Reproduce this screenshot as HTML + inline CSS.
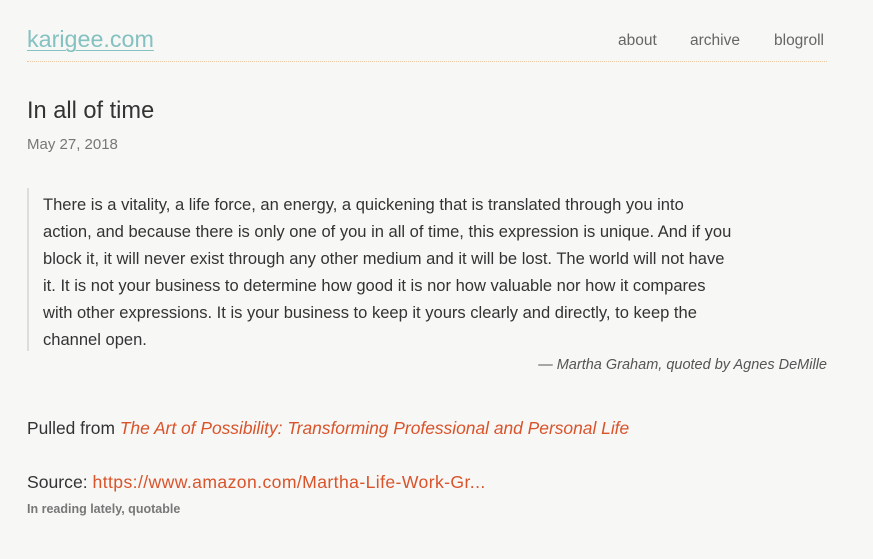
<!DOCTYPE html>
<html><head><meta charset="utf-8"><style>
body{margin:0;background:#f7f7f5;font-family:"Liberation Sans",sans-serif;color:#333;width:873px;height:559px;overflow:hidden;position:relative}
.a{position:absolute;white-space:nowrap}
.logo{left:27px;top:26px;font-size:23.3px;color:#84c1c1;text-decoration:underline;text-decoration-thickness:1px;text-underline-offset:3px}
.nav{top:32px;font-size:15.5px;color:#666}
.rule{left:27px;top:61px;width:800px;border-top:1px dotted #e8c9a0}
h1{position:absolute;left:27px;top:98px;margin:0;font-weight:normal;font-size:23.6px;color:#333}
.date{left:27px;top:136px;font-size:15px;color:#777}
.bq{position:absolute;left:27px;top:188px;height:163px;border-left:2px solid #ddd}
.q{left:43px;font-size:16.55px;color:#333;line-height:27px}
.cite{right:46px;top:357px;font-size:14.5px;font-style:italic;color:#555}
.p{left:27px;color:#333}
.red{color:#d9532b}
.tags{left:27px;top:502px;font-size:12.5px;font-weight:bold;color:#777}
</style></head><body>
<div class="a logo">karigee.com</div>
<div class="a nav" style="left:618px">about</div>
<div class="a nav" style="left:690px">archive</div>
<div class="a nav" style="left:774px">blogroll</div>
<div class="a rule"></div>
<h1>In all of time</h1>
<div class="a date">May 27, 2018</div>
<div class="bq"></div>
<div class="a q" style="top:191px">There is a vitality, a life force, an energy, a quickening that is translated through you into</div>
<div class="a q" style="top:218px">action, and because there is only one of you in all of time, this expression is unique. And if you</div>
<div class="a q" style="top:245px">block it, it will never exist through any other medium and it will be lost. The world will not have</div>
<div class="a q" style="top:272px">it. It is not your business to determine how good it is nor how valuable nor how it compares</div>
<div class="a q" style="top:299px">with other expressions. It is your business to keep it yours clearly and directly, to keep the</div>
<div class="a q" style="top:326px">channel open.</div>
<div class="a cite">— Martha Graham, quoted by Agnes DeMille</div>
<div class="a p" style="top:418px;font-size:17.4px">Pulled from <i class="red">The Art of Possibility: Transforming Professional and Personal Life</i></div>
<div class="a p" style="top:472px;font-size:17.6px">Source: <span class="red" style="letter-spacing:0.4px">https://www.amazon.com/Martha-Life-Work-Gr...</span></div>
<div class="a tags">In reading lately, quotable</div>
</body></html>
